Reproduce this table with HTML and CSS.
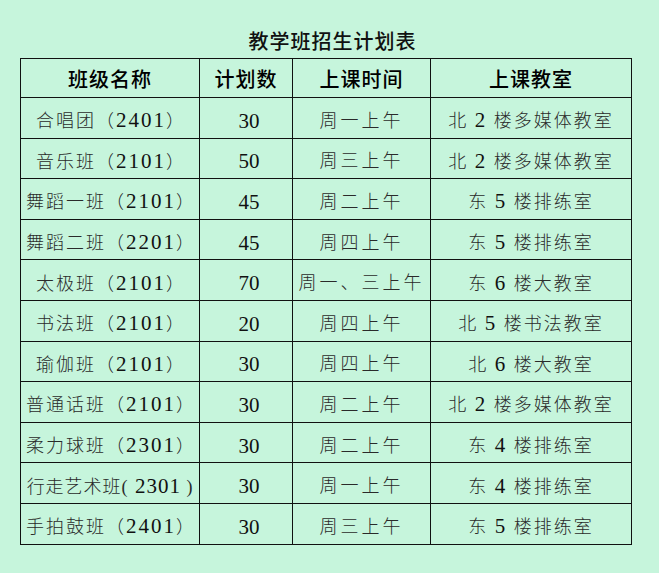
FILE: index.html
```html
<!DOCTYPE html>
<html lang="zh">
<head>
<meta charset="utf-8">
<title>教学班招生计划表</title>
<link rel="stylesheet" href="styles.css">
</head>
<body>
<div class="page">
  <h1 class="title">教学班招生计划表</h1>
  <table class="plan">
    <colgroup>
      <col class="c1"><col class="c2"><col class="c3"><col class="c4">
    </colgroup>
    <thead>
      <tr><th>班级名称</th><th>计划数</th><th>上课时间</th><th>上课教室</th></tr>
    </thead>
    <tbody>
      <tr><td class="name">合唱团（<span class="n">2401</span>）</td><td class="cnt">30</td><td class="time">周一上午</td><td class="room">北 <span class="n">2</span> 楼多媒体教室</td></tr>
      <tr><td class="name">音乐班（<span class="n">2101</span>）</td><td class="cnt">50</td><td class="time">周三上午</td><td class="room">北 <span class="n">2</span> 楼多媒体教室</td></tr>
      <tr><td class="name">舞蹈一班（<span class="n">2101</span>）</td><td class="cnt">45</td><td class="time">周二上午</td><td class="room">东 <span class="n">5</span> 楼排练室</td></tr>
      <tr><td class="name">舞蹈二班（<span class="n">2201</span>）</td><td class="cnt">45</td><td class="time">周四上午</td><td class="room">东 <span class="n">5</span> 楼排练室</td></tr>
      <tr><td class="name">太极班（<span class="n">2101</span>）</td><td class="cnt">70</td><td class="time">周一、三上午</td><td class="room">东 <span class="n">6</span> 楼大教室</td></tr>
      <tr><td class="name">书法班（<span class="n">2101</span>）</td><td class="cnt">20</td><td class="time">周四上午</td><td class="room">北 <span class="n">5</span> 楼书法教室</td></tr>
      <tr><td class="name">瑜伽班（<span class="n">2101</span>）</td><td class="cnt">30</td><td class="time">周四上午</td><td class="room">北 <span class="n">6</span> 楼大教室</td></tr>
      <tr><td class="name">普通话班（<span class="n">2101</span>）</td><td class="cnt">30</td><td class="time">周二上午</td><td class="room">北 <span class="n">2</span> 楼多媒体教室</td></tr>
      <tr><td class="name">柔力球班（<span class="n">2301</span>）</td><td class="cnt">30</td><td class="time">周二上午</td><td class="room">东 <span class="n">4</span> 楼排练室</td></tr>
      <tr><td class="name tight">行走艺术班(<span class="n"> 2301</span> )</td><td class="cnt">30</td><td class="time">周一上午</td><td class="room">东 <span class="n">4</span> 楼排练室</td></tr>
      <tr><td class="name">手拍鼓班（<span class="n">2401</span>）</td><td class="cnt">30</td><td class="time">周三上午</td><td class="room">东 <span class="n">5</span> 楼排练室</td></tr>
    </tbody>
  </table>
</div>
</body>
</html>
```

FILE: styles.css
```css
html, body {
  margin: 0;
  padding: 0;
  background: #c6f5dc;
}

.page {
  width: 659px;
  height: 573px;
  background: #c6f5dc;
  overflow: hidden;
}

.title {
  margin: 0;
  padding-top: 28px;
  height: 30px;
  line-height: 26px;
  text-align: center;
  font-family: "Noto Sans CJK SC", sans-serif;
  font-size: 20px;
  font-weight: 500;
  letter-spacing: 1px;
  color: #111;
  padding-left: 6px;
}

.plan {
  margin-left: 20px;
  border-collapse: collapse;
  table-layout: fixed;
  width: 611px;
}

.c1 { width: 179px; }
.c2 { width: 93px; }
.c3 { width: 138px; }
.c4 { width: 201px; }

.plan th,
.plan td {
  border: 1px solid #111;
  text-align: center;
  padding: 0;
  white-space: nowrap;
  overflow: visible;
}

.plan th {
  height: 38px;
  font-family: "Noto Sans CJK SC", sans-serif;
  font-size: 20px;
  font-weight: 500;
  letter-spacing: 1px;
  color: #000;
}

.plan td {
  height: 33.6px;
  padding-top: 6px;
  font-family: "Liberation Serif", "Noto Sans CJK SC", serif;
  font-size: 18px;
  font-weight: 300;
  color: #2a2a2a;
  line-height: 24px;
  letter-spacing: 3px;
}

.plan td.name {
  letter-spacing: 2px;
  padding-left: 2px;
}

.plan td.tight {
  letter-spacing: 1px;
  padding-left: 0;
}

.plan td.cnt {
  font-size: 21px;
  letter-spacing: 0;
  color: #111;
  padding-left: 6px;
}

.plan td.time {
  letter-spacing: 3px;
}

.plan td.room {
  letter-spacing: 2px;
}

.n {
  font-family: "Liberation Serif", serif;
  font-size: 21px;
  color: #111;
}
```
